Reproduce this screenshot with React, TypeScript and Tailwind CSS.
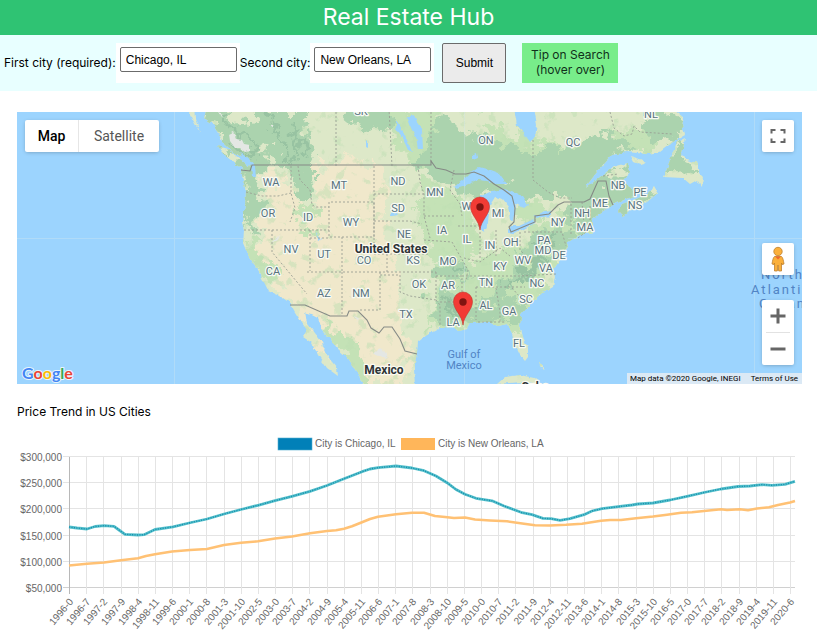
import { useState } from "react";

type Point = [number, number];
type Label = [string, number, number];

const STATES: Label[] = [
  ["ON", 486, 140], ["QC", 573, 142], ["NL", 651, 114], ["SK", 361, 111],
  ["WA", 271, 182], ["MT", 339, 185], ["ND", 398, 181], ["MN", 435, 192],
  ["OR", 268, 213], ["ID", 308, 217], ["SD", 398, 208], ["WI", 468, 206],
  ["MI", 498, 213], ["WY", 351, 222], ["IA", 442, 230], ["NE", 404, 234],
  ["IL", 467, 239], ["IN", 490, 245], ["OH", 511, 242], ["PA", 544, 240],
  ["NV", 291, 249], ["UT", 324, 254], ["CO", 364, 260], ["KS", 413, 260],
  ["MO", 448, 261], ["KY", 500, 266], ["WV", 523, 260], ["MD", 543, 250],
  ["DE", 559, 255], ["VA", 546, 268], ["CA", 273, 271], ["AZ", 324, 293],
  ["NM", 361, 293], ["OK", 419, 284], ["AR", 448, 285], ["TN", 486, 282],
  ["NC", 537, 283], ["SC", 526, 299], ["GA", 509, 311], ["AL", 486, 305],
  ["TX", 406, 314], ["LA", 453, 322], ["FL", 519, 343], ["NY", 558, 222],
  ["NH", 582, 213], ["MA", 585, 227], ["ME", 600, 203], ["NB", 618, 185],
  ["PE", 640, 192], ["NS", 635, 205],
];

const LAND =
  "M207 108 L204 118 L212 123 L218 133 L223 142 L233 152 L243 158 L250 163 L249 169 L241 170 L243 180 L246 192 L245 205 L242 222 L244 230 L243 243 L248 255 L256 267 L262 278 L268 290 L277 294 L290 303 L295 312 L302 323 L307 330 L303 337 L312 343 L318 355 L327 368 L338 376 L337 368 L328 357 L322 343 L315 333 L307 323 L305 313 L312 315 L318 318 L322 330 L330 338 L337 348 L348 358 L357 372 L365 388 L415 388 L414 368 L417 353 L418 342 L427 335 L440 328 L453 327 L457 331 L467 329 L470 323 L487 322 L498 326 L507 324 L512 333 L515 345 L520 355 L525 361 L528 357 L528 348 L523 337 L520 325 L521 315 L527 308 L535 300 L543 293 L553 287 L555 277 L553 270 L560 260 L567 248 L568 242 L580 235 L593 232 L591 220 L600 213 L613 205 L628 198 L636 196 L630 188 L623 180 L630 172 L628 163 L613 167 L600 177 L586 188 L587 185 L597 172 L612 155 L627 152 L647 154 L660 152 L673 142 L685 135 L682 125 L684 118 L672 108 Z";
const ISLANDS = [
  "M685 138 L677 142 L672 155 L667 168 L663 177 L683 178 L690 184 L697 180 L702 187 L703 177 L698 172 L698 163 L687 160 L682 155 Z",
  "M618 212 L623 217 L630 211 L647 202 L658 193 L654 186 L647 194 L634 200 L622 204 Z",
  "M218 146 L228 149 L240 159 L250 167 L249 171 L238 166 L226 156 Z",
  "M187 108 L193 120 L200 133 L195 118 L194 108 Z",
  "M630 156 L640 159 L647 163 L641 165 L633 162 Z",
  "M497 384 L505 377 L520 375 L534 378 L543 386 L522 382 Z",
  "M539 362 L544 368 L543 370 L540 366 Z",
];
const WATER = [
  "M514 108 L517 125 L523 132 L530 142 L535 137 L537 125 L534 108 Z",
  "M454 187 L463 180 L472 171 L480 167 L491 170 L499 173 L507 184 L497 184 L486 181 L478 180 L466 185 L456 188 Z",
  "M481 196 L492 191 L504 189 L515 192 L522 196 L528 205 L524 208 L516 204 L514 222 L510 219 L508 206 L503 199 L495 197 L490 205 L488 222 L484 232 L480 228 L480 210 Z",
  "M508 232 L510 226 L519 226 L534 219 L535 223 L522 230 L511 234 Z",
  "M533 216 L540 213 L551 211 L551 216 L537 218 Z",
  "M407 117 L414 115 L418 124 L422 129 L423 149 L418 149 L416 137 L411 128 Z",
  "M396 120 L400 126 L405 135 L412 152 L408 150 L402 137 L396 128 Z",
  "M240 152 L250 160 L255 166 L256 177 L252 176 L251 166 L243 161 Z",
  "M472 155 L477 153 L478 158 L473 160 Z",
  "M316 232 L322 239 L319 241 Z",
  "M366 140 L368 142 L368 147 L366 146 Z",
  "M390 213 L396 212 L398 215 L392 216 Z",
];
const FOREST = [
  "M205 108 L312 108 L304 124 L306 142 L314 160 L314 174 L308 182 L304 198 L296 198 L293 182 L290 166 L262 164 L258 184 L262 208 L256 228 L248 232 L240 200 L238 166 L222 150 Z",
  "M338 108 L388 108 L392 130 L375 132 L350 118 Z",
  "M430 130 L446 114 L466 134 L498 142 L524 148 L566 148 L600 132 L640 146 L615 158 L590 186 L570 196 L545 196 L525 202 L505 186 L478 196 L445 184 L420 166 Z",
  "M640 118 L662 112 L686 122 L682 138 L654 142 L642 132 Z",
  "M560 205 L590 182 L632 166 L642 192 L594 230 L578 234 L570 222 Z",
  "M536 232 L568 224 L570 238 L550 256 L528 274 L500 292 L488 300 L488 292 L512 268 Z",
  "M432 300 L446 286 L458 292 L462 312 L486 314 L476 298 L500 296 L530 302 L518 322 L490 324 L448 322 L430 322 Z",
  "M436 265 L460 256 L466 280 L446 280 L436 276 Z",
  "M668 158 L684 136 L684 160 L700 172 L690 178 L672 170 Z",
  "M615 206 L640 196 L658 188 L646 204 L622 218 Z",
];
const MEADOW = [
  "M385 108 L440 108 L432 142 L420 168 L404 160 L392 130 Z",
  "M420 180 L460 196 L480 232 L470 262 L428 258 L420 228 Z",
  "M436 260 L480 258 L520 244 L560 240 L552 290 L518 334 L426 330 L432 296 Z",
  "M536 220 L580 210 L600 232 L550 256 L526 248 Z",
  "M480 118 L516 134 L560 146 L636 128 L676 130 L650 150 L590 150 L500 150 Z",
  "M244 234 L252 238 L276 270 L280 284 L268 282 L248 256 Z",
  "M318 322 L352 338 L372 388 L356 388 L336 350 Z",
  "M300 205 L312 200 L320 222 L308 232 L296 224 Z",
  "M512 205 L535 205 L548 212 L520 224 Z",
];
const CLEARINGS = [
  "M226 110 L246 108 L254 120 L246 126 L234 120 Z",
  "M262 150 L272 146 L274 158 L266 162 Z",
];
const DESERT =
  "M262 168 L276 168 L288 186 L300 204 L318 202 L304 160 L322 166 L345 158 L376 162 L388 182 L384 214 L388 240 L400 266 L396 286 L400 306 L402 326 L412 342 L408 360 L398 388 L368 388 L345 352 L318 318 L334 370 L304 322 L288 300 L268 288 L286 286 L258 252 L260 230 L268 206 Z";
const SPINES = [
  "M218 112 L232 128 L246 138 L262 156", "M268 112 L278 130 L286 150 L300 162", "M230 146 L250 154",
  "M290 120 L296 136 L304 158", "M546 248 L528 268 L504 286", "M556 236 L540 258 L520 278",
  "M442 296 L452 306 L456 318", "M452 266 L460 272",
];
const SNOW = [
  "M229 134 L233 132 L236 139 L242 140 L244 144 L250 145 L250 151 L245 152 L240 148 L235 148 L230 141 Z",
  "M219 112 L224 114 L222 117 Z",
  "M270 125 L273 124 L274 128 Z",
  "M374 354 L380 348 L388 354 L386 359 L380 357 Z",
  "M272 243 L280 235 L278 240 Z",
  "M354 316 L358 318 L357 322 Z",
];
const STATE_LINES =
  "M246 192 L262 196 L278 196 L291 193 M291 166 L291 193 L295 208 L290 222 M244 230 H329 M272 230 V252 L307 294 M310 230 V271 M298 166 L300 180 L310 190 L312 205 L316 207 H329 M329 202 V237 H374 V202 H329 M374 166 V254 M374 194 H424 M374 221 H410 L422 224 M342 272 V314 M307 272 H436 M310 238 H329 M342 237 V272 M387 254 V272 M374 254 H430 M380 272 V310 H360 M380 275 H400 V292 L410 296 L436 300 M436 272 V300 L440 305 V325 M418 166 L420 182 L424 194 V216 L430 238 M424 216 H456 M424 240 L452 242 L460 256 L468 270 L466 280 M336 108 V166 M389 108 L392 166 M431 108 V164 M454 170 L450 190 L460 204 L462 216 M458 226 H482 M480 232 V258 M496 230 V256 M464 258 L480 262 L500 248 L510 256 M462 276 H520 L556 274 M436 276 H462 L462 312 M440 302 H454 M476 287 V320 M496 288 L500 312 V322 M476 287 H525 M512 288 L528 306 M478 322 H506 M520 232 V250 L532 262 M524 232 H562 L566 246 M533 140 V180 L548 192 L560 198 H572 M571 204 V236 M590 206 V222 M578 238 L586 232 M582 202 L584 224 M603 176 L618 174 M610 112 L614 128 L624 136 L632 134 L634 126 L640 132 L672 134";
const BORDERS =
  "M241 170 L250 171 L252 165 H431 V161 L436 168 L446 170 L455 174 L466 174 L474 172 L484 176 L494 184 L504 190 L512 196 L515 208 L514 222 L509 227 L511 232 L535 222 V216 L549 214 L558 205 L564 202 H584 L590 199 L598 181 H606 L609 196 L613 205 M290 305 L305 305 L330 316 H347 L349 311 H358 L367 320 L371 328 L379 333 L384 327 H392 L400 339 L405 351 L417 354";

const CHICAGO: Point[] = [
  [69, 527], [77, 528], [87, 529], [95, 526.5], [104, 525.7], [114, 526.3], [119, 530], [125, 534.3],
  [138, 535], [144, 534.7], [155, 529.5], [173, 526.8], [189, 523], [207, 519], [224, 514], [241, 509.5],
  [258, 505.3], [275, 500.7], [292, 496.3], [310, 491.3], [327, 485.5], [344, 478.7], [362, 471.7],
  [370, 469], [378, 467.7], [396, 466], [412, 468], [424, 470.7], [436, 476], [447, 482.7], [456, 489.5],
  [465, 494.3], [476, 498.3], [492, 500.8], [504, 506], [521, 512.3], [532, 514.7], [543, 518.3],
  [551, 518.7], [560, 520.3], [570, 518.7], [584, 514.7], [592, 511], [602, 508.7], [618, 506.7],
  [632, 505], [638, 504], [653, 503], [670, 500], [687, 496.3], [704, 492.5], [721, 489], [738, 486.5],
  [750, 486], [762, 484.6], [772, 485.3], [785, 484.3], [795, 481.3],
];
const NEW_ORLEANS: Point[] = [
  [69, 565.5], [87, 563.7], [104, 562.5], [121, 560.3], [138, 558.3], [146, 556], [155, 554.3],
  [172, 551.5], [190, 550], [207, 549], [224, 545], [241, 542.7], [258, 541.3], [275, 538.5],
  [292, 536.5], [310, 533.3], [327, 531], [336, 530.3], [344, 528.7], [352, 526.3], [362, 522.3],
  [370, 519], [378, 516.7], [396, 514.3], [412, 512.7], [424, 512.7], [435, 516], [445, 517],
  [454, 518], [465, 517.5], [475, 519.5], [490, 520.5], [507, 521.3], [524, 523.8], [535, 525.3],
  [550, 525.5], [566, 524.8], [582, 523.7], [601, 520.7], [610, 520], [621, 520], [636, 518.3],
  [653, 516.5], [667, 514.7], [681, 512.8], [692, 512.3], [704, 511], [721, 509.3], [727, 510],
  [740, 509.3], [748, 510.3], [757, 508.5], [769, 507.3], [778, 505], [790, 502.5], [795, 501],
];

const toPath = (points: Point[]) => "M" + points.map((p) => p.join(" ")).join(" L");

const MONTH_TICKS = Array.from({ length: 43 }, (_, i) => {
  const months = i * 7;
  return { x: 69.5 + Math.round(i * 17.17), text: `${1996 + Math.floor(months / 12)}-${months % 12}` };
});
const PRICE_TICKS = [300, 250, 200, 150, 100, 50].map((price, i) => ({
  y: 457 + Math.round(i * 26.2) - 0.5,
  text: `$${price},000`,
}));

function Pin({ x, y }: { x: number; y: number }) {
  return (
    <g transform={`translate(${x} ${y})`}>
      <path d="M0 0 C-1 -10 -9.500 -15 -9.500 -23.500 A9.500 9.500 0 0 1 9.500 -23.500 C9.500 -15 1 -10 0 0 Z" fill="#f23b35" stroke="#c5342c" strokeWidth="0.600" />
      <circle cy="-23" r="3.700" fill="#811411" />
    </g>
  );
}

function MapCanvas() {
  return (
    <svg className="block h-full w-full font-[Roboto,sans-serif]" viewBox="17 112 785 272" preserveAspectRatio="xMidYMid slice" role="img" aria-label="Map of the United States">
      <defs>
        <clipPath id="land"><path d={LAND} />{ISLANDS.map((d) => <path key={d} d={d} />)}</clipPath>
        <filter id="coast" filterUnits="userSpaceOnUse" x="17" y="100" width="785" height="300">
          <feTurbulence type="fractalNoise" baseFrequency="0.18" numOctaves="2" seed="4" />
          <feDisplacementMap in="SourceGraphic" scale="4" xChannelSelector="R" yChannelSelector="G" />
        </filter>
        <filter id="ragged" filterUnits="userSpaceOnUse" x="17" y="80" width="785" height="330">
          <feTurbulence type="fractalNoise" baseFrequency="0.07" numOctaves="4" seed="9" />
          <feDisplacementMap in="SourceGraphic" scale="34" xChannelSelector="R" yChannelSelector="G" />
        </filter>
        <filter id="patches" filterUnits="userSpaceOnUse" x="180" y="100" width="540" height="300" colorInterpolationFilters="sRGB">
          <feTurbulence type="fractalNoise" baseFrequency="0.09" numOctaves="3" seed="21" />
          <feColorMatrix values="0 0 0 0 0.74  0 0 0 0 0.87  0 0 0 0 0.7  9 0 0 0 -5.3" />
        </filter>
      </defs>
      <rect x="-400" y="100" width="1700" height="300" fill="#9cd4fe" />
      <g filter="url(#coast)">
        <g clipPath="url(#land)">
          <rect x="180" y="100" width="540" height="300" fill="#dde8c8" />
          <g filter="url(#ragged)">
            <path d={DESERT} fill="#f0e8cb" />
            {MEADOW.map((d) => <path key={d} d={d} fill="#c4e2b6" />)}
          </g>
          <rect x="180" y="100" width="540" height="300" filter="url(#patches)" opacity="0.5" />
          <g filter="url(#ragged)">
            {FOREST.map((d) => <path key={d} d={d} fill="#abd3ae" />)}
            {CLEARINGS.map((d) => <path key={d} d={d} fill="#dde8c8" />)}
            <g fill="none" stroke="#98c3a2" strokeWidth="4">{SPINES.map((d) => <path key={d} d={d} />)}</g>
          </g>
          {SNOW.map((d) => <path key={d} d={d} fill="#e4e7e4" />)}
        </g>
        {WATER.map((d) => <path key={d} d={d} fill="#9cd4fe" />)}
      </g>
      <path d="M174.500 100 V400 M464.500 100 V400 M754.500 100 V400 M0 238.500 H244 M568 238.500 H900" stroke="#d5e8ee" strokeWidth="1" opacity="0.35" />
      <path d={STATE_LINES} fill="none" stroke="#9a9f94" strokeWidth="0.900" strokeDasharray="2 2" />
      <path d={BORDERS} fill="none" stroke="#858a86" strokeWidth="1.100" />
      <g fontSize="11" fill="#58727e" stroke="#f7faf4" strokeWidth="2.500" strokeLinejoin="round" paintOrder="stroke" textAnchor="middle">
        {STATES.map(([name, x, y]) => <text key={name} x={x} y={y + 4}>{name}</text>)}
      </g>
      <g fontSize="12" fontWeight="700" fill="#2e3436" stroke="#fbfaf2" strokeWidth="2.500" strokeLinejoin="round" paintOrder="stroke" textAnchor="middle">
        <text x="391" y="253">United States</text>
        <text x="384" y="374">Mexico</text>
        <text x="535" y="391">Cuba</text>
      </g>
      <g fill="#5184c5" textAnchor="middle" fontSize="11">
        <text x="464" y="358">Gulf of</text>
        <text x="464" y="369">Mexico</text>
      </g>
      <g fill="#5184c5" fontSize="13" className="tracking-[2px]">
        <text x="761" y="279">North</text>
        <text x="751" y="294">Atlantic</text>
        <text x="759" y="308">Ocean</text>
      </g>
      <Pin x={480} y={230} />
      <Pin x={463} y={325} />
    </svg>
  );
}

function PriceChart() {
  return (
    <svg className="block w-full font-['Liberation_Sans',Arial,sans-serif]" viewBox="17 431 785 203" fontSize="10" fill="#666" role="img" aria-label="Price trend by city">
      <rect x="278" y="438" width="34" height="12" fill="#0180b8" stroke="#54aed0" strokeWidth="0.600" />
      <text x="315" y="447">City is Chicago, IL</text>
      <rect x="401" y="438" width="34" height="12" fill="#ffb65a" />
      <text x="438" y="447">City is New Orleans, LA</text>
      {PRICE_TICKS.map((tick) => (
        <g key={tick.text}>
          <path d={`M63 ${tick.y} H795`} stroke={tick.text === "$50,000" ? "#d0d0d0" : "#e4e4e4"} />
          <text x="62" y={tick.y + 4} textAnchor="end">{tick.text}</text>
        </g>
      ))}
      {MONTH_TICKS.map((tick, i) => (
        <g key={tick.text}>
          <path d={`M${tick.x} 457 V594`} stroke={i === 0 ? "#b8b8b8" : "#e4e4e4"} />
          <text transform={`translate(${tick.x + 2} 600) rotate(-50)`} y="3" textAnchor="end">{tick.text}</text>
        </g>
      ))}
      <g fill="none" strokeLinejoin="round">
        <path d={toPath(NEW_ORLEANS)} stroke="#ffc174" strokeWidth="2.600" />
        <path d={toPath(CHICAGO)} stroke="#56c1cc" strokeWidth="2.800" />
        <path d={toPath(CHICAGO)} stroke="#188fae" strokeWidth="1.300" strokeDasharray="1.200 1.250" />
      </g>
    </svg>
  );
}

function CityField({ id, label, value, onChange }: { id: string; label: string; value: string; onChange: (v: string) => void }) {
  return (
    <>
      <label htmlFor={id} className="whitespace-nowrap">{label}</label>
      <div className="h-10 w-[124px] bg-white p-1">
        <input id={id} type="text" value={value} onChange={(e) => onChange(e.target.value)} className="h-[25px] w-[117px] rounded-xs border border-[#6b6b6b] bg-white px-[5px] font-['Liberation_Sans',Arial,sans-serif] text-xs text-black" />
      </div>
    </>
  );
}

export default function App() {
  const [first, setFirst] = useState("Chicago, IL");
  const [second, setSecond] = useState("New Orleans, LA");
  const control = "absolute right-2 flex w-8 items-center justify-center rounded-xs bg-white shadow-[0_1px_4px_-1px_rgba(0,0,0,0.3)]";

  return (
    <div className="bg-white font-[Inter,sans-serif] text-xs text-black">
      <header className="bg-[#2fc373] text-center text-white">
        <h1 className="text-[23px] leading-[35px]">Real Estate Hub</h1>
      </header>

      <form className="flex items-center bg-[#e8ffff] px-1 py-2" onSubmit={(e) => e.preventDefault()}>
        <CityField id="first-city" label="First city (required):" value={first} onChange={setFirst} />
        <CityField id="second-city" label="Second city:" value={second} onChange={setSecond} />
        <button type="submit" className="ml-2 h-10 w-16 rounded-xs border border-[#6b6b6b] bg-[#ebebeb] font-['Liberation_Sans',Arial,sans-serif]">Submit</button>
        <div className="ml-4 flex h-10 w-24 justify-center bg-[#78ed8a] pt-1 text-center leading-[15px] text-[#10301a]">
          Tip on Search<br />(hover over)
        </div>
      </form>

      <main className="pt-[21px] pr-[15px] pl-[17px]">
        <section className="relative h-[272px] overflow-hidden" aria-label="City map">
          <MapCanvas />
          <div className="absolute top-2 left-2 flex h-8 rounded-xs bg-white font-[Roboto,sans-serif] text-sm shadow-[0_1px_4px_-1px_rgba(0,0,0,0.3)]">
            <button type="button" className="w-[54px] border-r border-[#e6e6e6] font-medium">Map</button>
            <button type="button" className="w-20 text-[#565656]">Satellite</button>
          </div>
          <button type="button" aria-label="Toggle fullscreen" className={`${control} top-2 h-8`}>
            <svg width="16" height="16" viewBox="0 0 16 16" fill="none" stroke="#666" strokeWidth="2"><path d="M1.500 5.500 V2 H5.500 M10.500 2 H14.500 V5.500 M14.500 10.500 V14 H10.500 M5.500 14 H1.500 V10.500" /></svg>
          </button>
          <button type="button" aria-label="Street View" className={`${control} top-[131px] h-8`}>
            <svg width="16" height="26" viewBox="0 0 16 26" stroke="#bd8030" strokeWidth="0.800" fill="#fbb03b">
              <path d="M4.500 10.500 H11.500 C13 11.500 13.500 15 14 18 L12 18.500 L11.500 17 V25 H8.700 L8 19 L7.300 25 H4.500 V17 L4 18.500 L2 18 C2.500 15 3 11.500 4.500 10.500 Z" />
              <path d="M5 10.500 L8 13.500 L11 10.500 Z" fill="#f0682c" stroke="none" />
              <circle cx="8" cy="5.500" r="4.200" />
            </svg>
          </button>
          <div className={`${control} top-[188px] h-[65px] flex-col`}>
            <button type="button" aria-label="Zoom in" className="flex h-8 w-8 items-center justify-center">
              <svg width="16" height="16" viewBox="0 0 16 16" stroke="#666" strokeWidth="3"><path d="M0.500 8 H15.500 M8 0.500 V15.500" /></svg>
            </button>
            <div className="h-px w-6 bg-[#e2e2e2]" />
            <button type="button" aria-label="Zoom out" className="flex h-8 w-8 items-center justify-center">
              <svg width="16" height="16" viewBox="0 0 16 16" stroke="#666" strokeWidth="3"><path d="M0.500 8 H15.500" /></svg>
            </button>
          </div>
          <svg className="absolute bottom-0 left-1 font-[Lato,sans-serif]" width="60" height="22" viewBox="0 0 60 22" fontSize="16" fontWeight="700" role="img" aria-label="Google">
            <text x="1" y="17" stroke="#e9f4fc" strokeWidth="2" strokeLinejoin="round" paintOrder="stroke">
              <tspan fill="#4285f4">G</tspan><tspan fill="#ea4335">o</tspan><tspan fill="#fbbc05">o</tspan><tspan fill="#4285f4">g</tspan><tspan fill="#34a853">l</tspan><tspan fill="#ea4335">e</tspan>
            </text>
          </svg>
          <div className="absolute right-0 bottom-0 flex h-[11px] items-center gap-[10px] bg-[#dbe9f5] pr-1 pl-[3px] font-[Roboto,sans-serif] text-[8px] leading-[11px] text-black">
            <span>Map data ©2020 Google, INEGI</span>
            <a href="#terms">Terms of Use</a>
          </div>
        </section>

        <h2 className="mt-5 leading-4">Price Trend in US Cities</h2>
        <div className="mt-[11px]">
          <PriceChart />
        </div>
      </main>
    </div>
  );
}
